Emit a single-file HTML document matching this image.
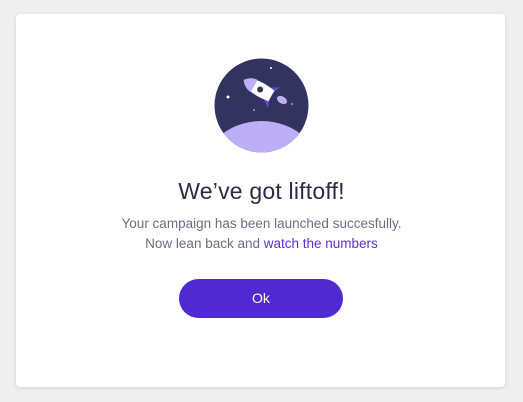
<!DOCTYPE html>
<html><head><style>
body{margin:0;width:523px;height:402px;background:#efefef;font-family:"Liberation Sans",sans-serif;position:relative;overflow:hidden}
.card{position:absolute;left:16px;top:14px;width:489px;height:373px;background:#fff;border-radius:4px;box-shadow:0 1px 4px rgba(0,0,0,.12)}
h1{position:absolute;left:0;right:0;top:178px;margin:0;text-align:center;font-weight:normal;font-size:23px;color:#2b2b45;letter-spacing:.2px}
p{position:absolute;left:0;right:0;margin:0;text-align:center;font-size:13.5px;color:#6e6e80}
a{color:#5a2fd6;text-decoration:none}
.btn{position:absolute;left:179px;top:279px;width:164px;height:39px;border-radius:20px;background:#5029d3;color:#fff;text-align:center;line-height:39px;font-size:14px}
</style></head><body>
<div class="card"></div>
<svg style="position:absolute;left:214px;top:58px" width="95" height="96" viewBox="0 0 95 96">
<defs><clipPath id="c"><circle cx="47.5" cy="47.5" r="47"/></clipPath></defs>
<g clip-path="url(#c)">
<rect width="95" height="96" fill="#32335e"/>
<ellipse cx="47.5" cy="120" rx="62" ry="57" fill="#bcaef7"/>
<circle cx="14" cy="39" r="1.5" fill="#fff"/>
<circle cx="57" cy="10" r="1" fill="#fff"/>
<circle cx="40" cy="52" r="1" fill="#9e94e0"/>
<circle cx="78" cy="46" r="1" fill="#9e94e0"/>
<g transform="translate(47,32) rotate(-60)">
<path d="M-6 6 L-12 15 L-4 12 Z" fill="#5b4fd8"/>
<path d="M6 6 L12 15 L4 12 Z" fill="#5b4fd8"/>
<path d="M0 -20 C8 -14 8 0 6 12 L-6 12 C-8 0 -8 -14 0 -20Z" fill="#fff"/>
<path d="M0 -20 C6 -16 7 -10 7 -8 L-7 -8 C-7 -10 -6 -16 0 -20Z" fill="#bcaef7"/>
<circle cx="0" cy="-1" r="3" fill="#32335e"/>
</g>
<ellipse cx="68" cy="42" rx="5.5" ry="3.5" transform="rotate(30 68 42)" fill="#bcaef7"/>
</g>
</svg>
<h1>We’ve got liftoff!</h1>
<p style="top:216px">Your campaign has been launched succesfully.</p>
<p style="top:236px">Now lean back and <a>watch the numbers</a></p>
<div class="btn">Ok</div>
</body></html>
